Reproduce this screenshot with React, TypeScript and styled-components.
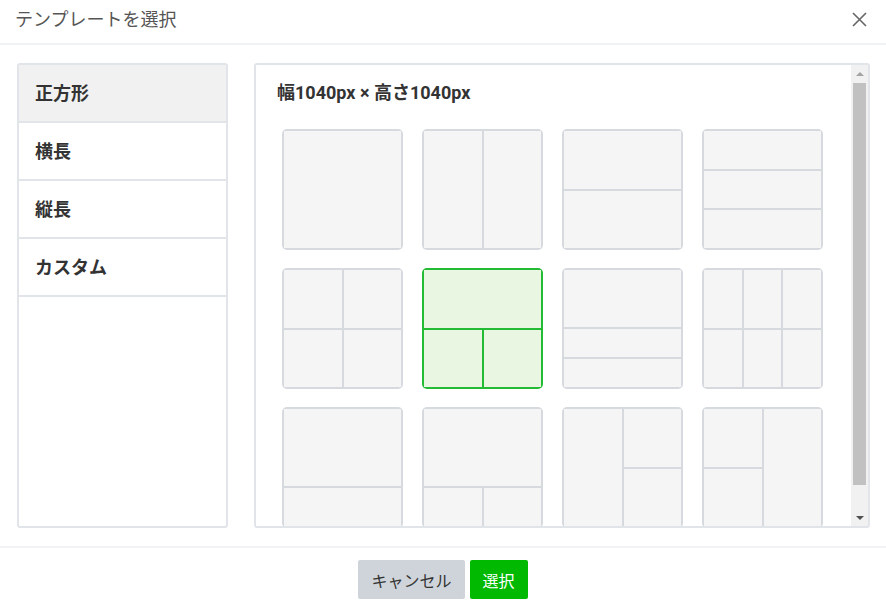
import React from "react";
import styled, { createGlobalStyle, css } from "styled-components";

const Global = createGlobalStyle`
  html, body { margin: 0; padding: 0; background: #fff; }
  body { font-family: Roboto, "Noto Sans CJK JP", sans-serif; color: #333; }
  * { box-sizing: border-box; }
`;

const Dialog = styled.div`
  width: 886px;
  height: 610px;
  display: flex;
  flex-direction: column;
  background: #fff;
`;

const Header = styled.div`
  height: 45px;
  flex: none;
  display: flex;
  align-items: center;
  justify-content: space-between;
  padding: 0 19px 0 15px;
  border-bottom: 2px solid #f1f2f3;
`;

const Title = styled.h1`
  margin: 0;
  font-size: 18px;
  font-weight: 400;
  color: #555;
  line-height: 1;
  padding-bottom: 4px;
`;

const CloseBtn = styled.button`
  border: 0;
  background: none;
  padding: 0;
  width: 16px;
  height: 16px;
  display: flex;
  align-items: center;
  justify-content: center;
  margin-bottom: 4px;
  cursor: pointer;
`;

const Body = styled.div`
  flex: 1;
  display: flex;
  gap: 26px;
  padding: 18px 16px 18px 17px;
  min-height: 0;
`;

const Side = styled.ul`
  list-style: none;
  margin: 0;
  padding: 0;
  width: 211px;
  flex: none;
  border: 2px solid #e1e4e8;
  border-radius: 3px;
  overflow: hidden;
`;

const SideItem = styled.li<{ $active?: boolean }>`
  height: 58px;
  display: flex;
  align-items: center;
  padding-left: 16px;
  padding-bottom: 2px;
  border-bottom: 2px solid #e1e4e8;
  font-size: 18px;
  font-weight: 700;
  color: #333;
  background: ${(p) => (p.$active ? "#f1f1f1" : "#fff")};
`;

const Main = styled.div`
  flex: 1;
  border: 2px solid #e1e4e8;
  border-radius: 3px;
  overflow: hidden;
  display: flex;
`;

const Scroll = styled.div`
  flex: 1;
  overflow: hidden;
  padding: 15px 0 22px 21px;
`;

const ScrollBar = styled.div`
  width: 17px;
  flex: none;
  background: #f1f1f1;
  display: flex;
  flex-direction: column;
`;

const Arrow = styled.div<{ $dir: "up" | "down" }>`
  height: 17px;
  flex: none;
  display: flex;
  align-items: center;
  justify-content: center;
  &::before {
    content: "";
    width: 0;
    height: 0;
    border-left: 4px solid transparent;
    border-right: 4px solid transparent;
    ${(p) =>
      p.$dir === "up"
        ? css`
            border-bottom: 4px solid #a3a3a3;
          `
        : css`
            border-top: 4px solid #505050;
          `}
  }
`;

const Thumb = styled.div`
  height: 402px;
  margin: 1px 2px 0 2px;
  background: #c1c1c1;
`;

const TrackRest = styled.div`
  flex: 1;
`;

const SizeLabel = styled.div`
  font-size: 18px;
  font-weight: 700;
  color: #333;
  line-height: 26px;
`;

const Tiles = styled.div`
  display: grid;
  grid-template-columns: repeat(4, 121px);
  column-gap: 19px;
  row-gap: 18px;
  margin: 23px 0 0 5px;
`;

type Layout = { cols: string; rows: string; areas: string; cells: string[] };

const Tile = styled.div<{ $l: Layout; $sel?: boolean }>`
  width: 121px;
  height: 121px;
  border-radius: 5px;
  overflow: hidden;
  display: grid;
  grid-template-columns: ${(p) => p.$l.cols};
  grid-template-rows: ${(p) => p.$l.rows};
  grid-template-areas: ${(p) => p.$l.areas};
  gap: 2px;
  padding: 2px;
  ${(p) =>
    p.$sel
      ? css`
          background: #22bb33;
        `
      : css`
          background: #d6dadf;
        `}
`;

const Cell = styled.div<{ $area: string; $sel?: boolean }>`
  grid-area: ${(p) => p.$area};
  background: ${(p) => (p.$sel ? "#e9f6e1" : "#f5f5f5")};
`;

const Footer = styled.div`
  height: 64px;
  flex: none;
  border-top: 2px solid #f1f2f3;
  display: flex;
  align-items: center;
  justify-content: center;
  gap: 5px;
  padding-top: 1px;
`;

const Button = styled.button<{ $primary?: boolean }>`
  height: 39px;
  border: 0;
  border-radius: 2px;
  padding: 0 13px;
  font-family: Roboto, "Noto Sans CJK JP", sans-serif;
  font-size: 16px;
  cursor: pointer;
  color: ${(p) => (p.$primary ? "#fff" : "#333")};
  background: ${(p) => (p.$primary ? "#00b900" : "#cfd4da")};
`;

const layouts: Layout[] = [
  { cols: "1fr", rows: "1fr", areas: `"a"`, cells: ["a"] },
  { cols: "1fr 1fr", rows: "1fr", areas: `"a b"`, cells: ["a", "b"] },
  { cols: "1fr", rows: "1fr 1fr", areas: `"a" "b"`, cells: ["a", "b"] },
  { cols: "1fr", rows: "1fr 1fr 1fr", areas: `"a" "b" "c"`, cells: ["a", "b", "c"] },
  { cols: "1fr 1fr", rows: "1fr 1fr", areas: `"a b" "c d"`, cells: ["a", "b", "c", "d"] },
  { cols: "1fr 1fr", rows: "1fr 1fr", areas: `"a a" "b c"`, cells: ["a", "b", "c"] },
  { cols: "1fr", rows: "2fr 1fr 1fr", areas: `"a" "b" "c"`, cells: ["a", "b", "c"] },
  { cols: "1fr 1fr 1fr", rows: "1fr 1fr", areas: `"a b c" "d e f"`, cells: ["a", "b", "c", "d", "e", "f"] },
  { cols: "1fr", rows: "2fr 1fr", areas: `"a" "b"`, cells: ["a", "b"] },
  { cols: "1fr 1fr", rows: "2fr 1fr", areas: `"a a" "b c"`, cells: ["a", "b", "c"] },
  { cols: "1fr 1fr", rows: "1fr 1fr", areas: `"a b" "a c"`, cells: ["a", "b", "c"] },
  { cols: "1fr 1fr", rows: "1fr 1fr", areas: `"a c" "b c"`, cells: ["a", "b", "c"] },
];

const categories = ["正方形", "横長", "縦長", "カスタム"];

export default function App() {
  const selected = 5;
  return (
    <>
      <Global />
      <Dialog>
        <Header>
          <Title>テンプレートを選択</Title>
          <CloseBtn aria-label="close">
            <svg width="15" height="15" viewBox="0 0 15 15">
              <path d="M1 1L14 14M14 1L1 14" stroke="#666" strokeWidth="1.6" fill="none" />
            </svg>
          </CloseBtn>
        </Header>
        <Body>
          <Side>
            {categories.map((c, i) => (
              <SideItem key={c} $active={i === 0}>
                {c}
              </SideItem>
            ))}
          </Side>
          <Main>
            <Scroll>
              <SizeLabel>幅1040px × 高さ1040px</SizeLabel>
              <Tiles>
                {layouts.map((l, i) => (
                  <Tile key={i} $l={l} $sel={i === selected}>
                    {l.cells.map((a) => (
                      <Cell key={a} $area={a} $sel={i === selected} />
                    ))}
                  </Tile>
                ))}
              </Tiles>
            </Scroll>
            <ScrollBar aria-hidden>
              <Arrow $dir="up" />
              <Thumb />
              <TrackRest />
              <Arrow $dir="down" />
            </ScrollBar>
          </Main>
        </Body>
        <Footer>
          <Button>キャンセル</Button>
          <Button $primary>選択</Button>
        </Footer>
      </Dialog>
    </>
  );
}
